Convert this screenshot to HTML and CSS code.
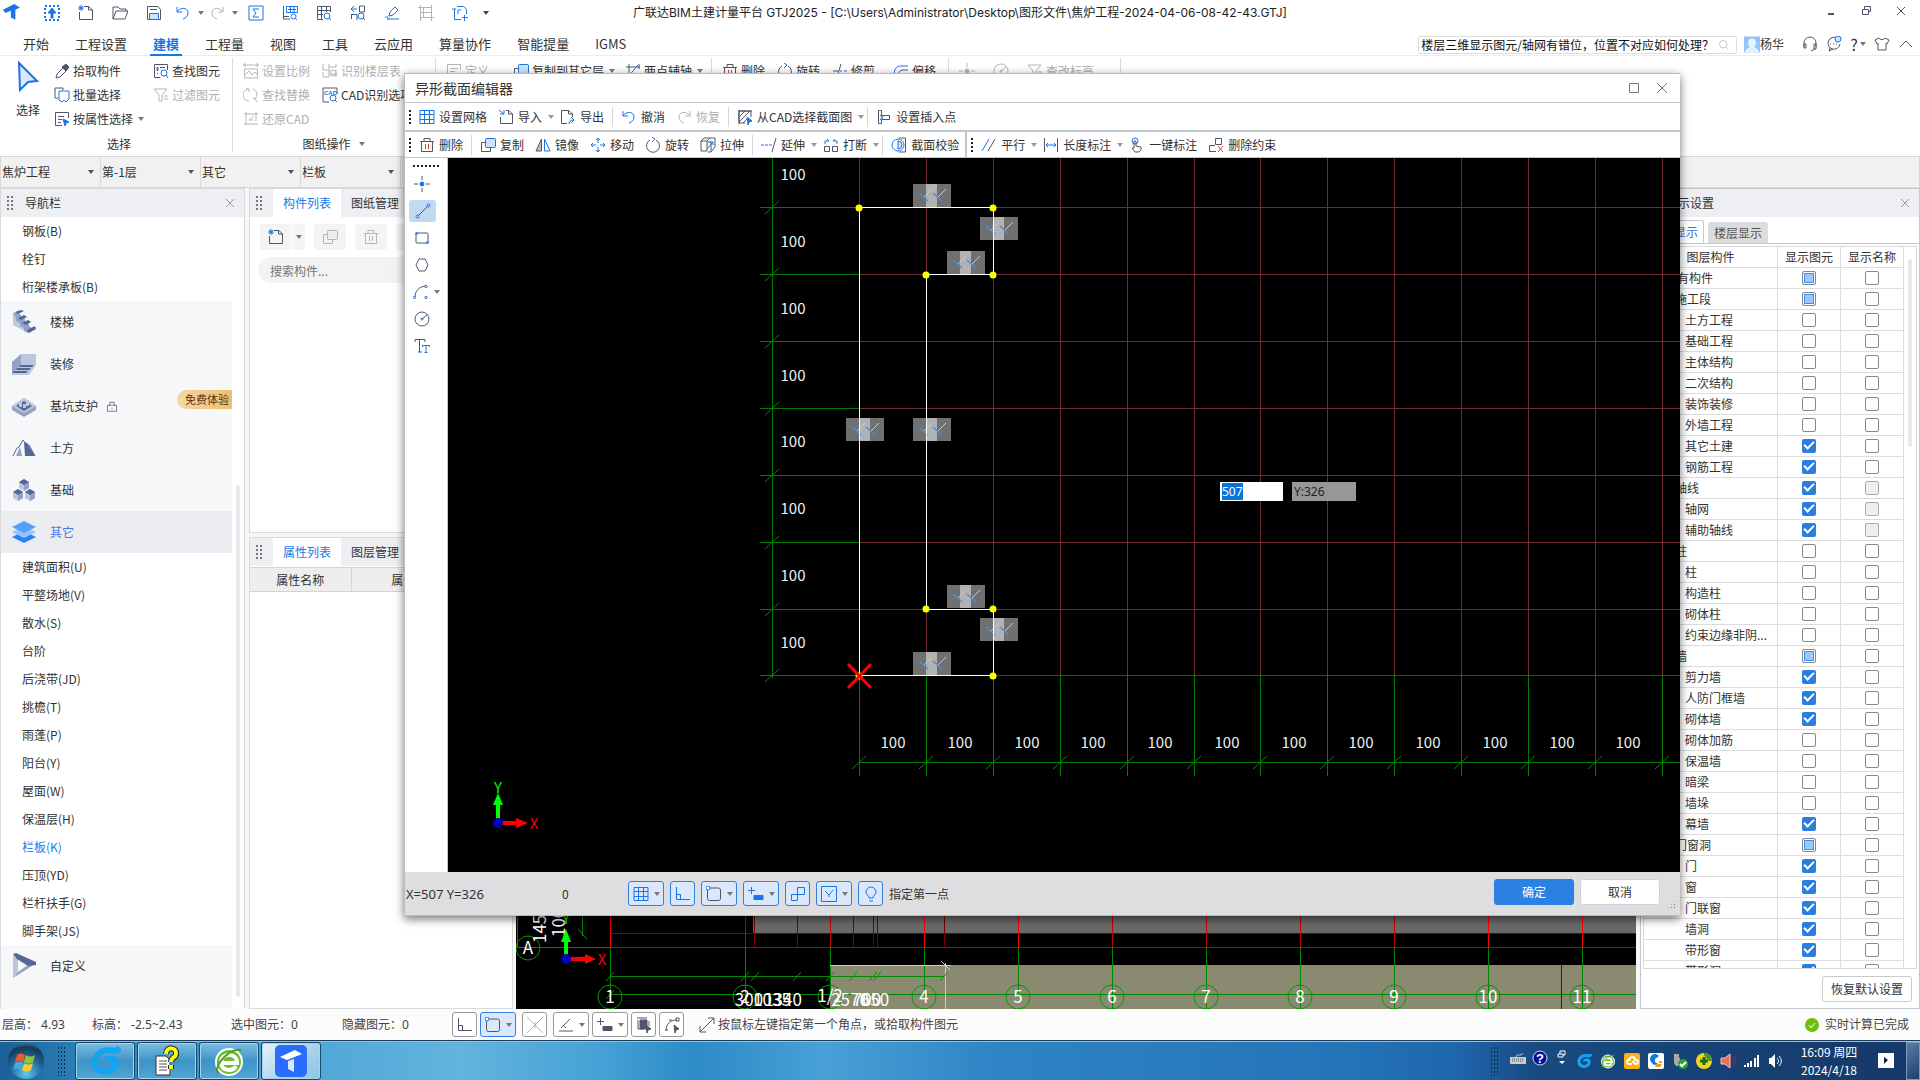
FILE: index.html
```html
<!DOCTYPE html>
<html lang="zh-CN">
<head>
<meta charset="utf-8">
<title>广联达BIM土建计量平台 GTJ2025</title>
<link rel="stylesheet" href="styles.css">
</head>
<body>
<svg class="defs" aria-hidden="true">
  <symbol id="undo" viewBox="0 0 16 16"><path class="b" d="M2 2v5h5M2 7C5 2 13 2 13 8c0 3-2 5-5 6"/></symbol>
  <symbol id="redo" viewBox="0 0 16 16"><path d="M14 2v5H9M14 7C11 2 3 2 3 8c0 3 2 5 5 6"/></symbol>
  <symbol id="new" viewBox="0 0 16 16"><path d="M6 1.500h5l3.500 3.500v9.500h-13V7M10.500 1.500V5h4"/><path class="b" d="M1 1l4 4M5 1L1 5M3 0v6M0 3h6"/></symbol>
  <symbol id="grid" viewBox="0 0 16 16"><path class="b" d="M1 1.500h14v13H1zM5.500 1.500v13M10.500 1.500v13M1 5.500h14M1 10.500h14"/></symbol>
  <symbol id="import" viewBox="0 0 16 16"><path d="M8 1.500h3l3.500 3.500v9.500h-12V8M10.500 1.500V5h4"/><path class="b" d="M1 1l5 4M6 1v4H2"/></symbol>
  <symbol id="export" viewBox="0 0 16 16"><path d="M7 14.500H1.500v-13H9l3.500 3.500v3M8.500 1.500V5h4"/><path class="b" d="M9 15c0-3 2-4 5-4M11 8l3 3-3 3"/></symbol>
  <symbol id="trash" viewBox="0 0 16 16"><path d="M1 4.500h14M5 4V1.500h6V4M2.500 4.500v10h11v-10"/><path class="r" d="M6.500 7v5M9.500 7v5"/></symbol>
  <symbol id="copy" viewBox="0 0 16 16"><path d="M5 5.500H1.500v9h9V11"/><rect class="bf" x="5.500" y="1.500" width="10" height="9" rx="1"/></symbol>
  <symbol id="mirror" viewBox="0 0 16 16"><path class="g" d="M6.500 2v12H1z"/><path class="b" d="M9.500 2v12H15z"/></symbol>
  <symbol id="move" viewBox="0 0 16 16"><path class="b" d="M8 1v5M8 10v5M1 8h5M10 8h5M6 3l2-2 2 2M6 13l2 2 2-2M3 6L1 8l2 2M13 6l2 2-2 2"/></symbol>
  <symbol id="rotate" viewBox="0 0 16 16"><path d="M11 3a6.500 6.500 0 1 1-6 0"/><path class="b" d="M7 0l3 2-3 3"/></symbol>
  <symbol id="stretch" viewBox="0 0 16 16"><path d="M1 4h6v10H1zM1 4l3-3h11v9l-4 5H8M7 4l3-3M8 5h3v9"/><path class="b" d="M7 12l6-7M10 5h3v3"/></symbol>
  <symbol id="extend" viewBox="0 0 16 16"><path d="M15 1l-4 14"/><path class="b" d="M0 8h3M4 8h3M8 8h3"/></symbol>
  <symbol id="break" viewBox="0 0 16 16"><path d="M1.500 9.500h5v5h-5zM9.500 9.500h5v5h-5z"/><path class="b" d="M2 4h4L4 2M2 7V4M14 4h-4l2-2M14 7V4"/></symbol>
  <symbol id="check-sec" viewBox="0 0 16 16"><path d="M8 1h6.500v14H8"/><circle class="b" cx="7" cy="8" r="6"/><path class="bf" d="M7 4a4 4 0 0 1 0 8z"/></symbol>
  <symbol id="parallel" viewBox="0 0 16 16"><path class="b" d="M1 14L8 2"/><path d="M7 14l7-12"/></symbol>
  <symbol id="length" viewBox="0 0 16 16"><path d="M1.500 1v14M14.500 1v14"/><path class="b" d="M3 8h10M5 6L3 8l2 2M11 6l2 2-2 2"/></symbol>
  <symbol id="touch" viewBox="0 0 16 16"><circle class="b" cx="6" cy="4" r="3"/><path d="M5 11V4h2v5l5 1v3l-2 2H6l-3-4z"/></symbol>
  <symbol id="del-con" viewBox="0 0 16 16"><path d="M7.500 1.500h6v6h-6zM7 8.500H1.500v6H8"/><path class="r" d="M10 9l5 6M15 9l-5 6"/></symbol>
  <symbol id="cad-sec" viewBox="0 0 16 16"><path d="M2 2h12v6M2 2v12h6M2 8l6-6M2 13L13 2M6 14l4-4M1 2h14M2 1v14"/><path class="bb" d="M10 8l5 4-3 1-1 3z"/></symbol>
  <symbol id="insert" viewBox="0 0 16 16"><path d="M2.500 1.500h3v5h8v4h-8v4h-3z"/><path class="b" d="M4 6l4 5M8 6l-4 5"/></symbol>
  <symbol id="picker" viewBox="0 0 16 16"><path d="M2 15l1-4 6-6 3 3-6 6z"/><path class="d" d="M8 4l4-3 3 3-3 4z"/></symbol>
  <symbol id="batch" viewBox="0 0 16 16"><path d="M4 11H1V1h8v2"/><path class="b" d="M5 4h10v8l-3 3-2-2-2 2-3-2z"/></symbol>
  <symbol id="attr" viewBox="0 0 16 16"><path d="M8 14.500H1.500v-13h13V7M4 5.500h6M4 8.500h4M4 11.500h3"/><path class="bb" d="M9 8l6 3-3 1-1 3z"/></symbol>
  <symbol id="find" viewBox="0 0 16 16"><path d="M7 14.500H1.500v-13h13V7M4 4.500h1v3H4zM4 10.500h1M7 4.500h5"/><circle class="b" cx="11" cy="10" r="3"/><path class="b" d="M13 12l2 3"/></symbol>
  <symbol id="filter" viewBox="0 0 16 16"><path d="M1 2h13L9 8v6H6V8zM11 9h4M11 12h4"/></symbol>
  <symbol id="ratio" viewBox="0 0 16 16"><path d="M0 2h16M2 0v4M14 0v4M1.500 6h13v9h-13zM2 12l4-4 3 4 3-3 3 3"/></symbol>
  <symbol id="floors" viewBox="0 0 16 16"><path d="M1 1v6h6M7 1v13H1V9M7 4h7V1M9 11h6M14 7v7"/><circle class="b" cx="11" cy="10" r="3"/></symbol>
  <symbol id="replace" viewBox="0 0 16 16"><path d="M6 14a6 6 0 0 1 0-12M3 2h3v3M10 2a6 6 0 0 1 2 10M10 11l2 1 2 3"/></symbol>
  <symbol id="restore" viewBox="0 0 16 16"><path d="M1 3h14M3 1v13M1 13h14M13 1v9M6 9l5-4M6 9h4"/></symbol>
  <symbol id="cad" viewBox="0 0 16 16"><path d="M7 15H1V1h14v6"/><text x="2" y="8" class="cadtext">CAD</text><circle class="b" cx="11" cy="11" r="3"/><path class="b" d="M13 13l2 2"/></symbol>
  <symbol id="define" viewBox="0 0 16 16"><path d="M8 14.500H1.500v-13h13V7M4 5.500h8M4 8.500h5M10 11.500h5"/></symbol>
  <symbol id="aux" viewBox="0 0 16 16"><path d="M1 4h14M4 1v14M14 1v5"/><path class="b" d="M3 14L13 2"/></symbol>
  <symbol id="trim" viewBox="0 0 16 16"><path d="M1 8h5M9 1L5 14"/><path class="b" d="M8 8h2M12 8h3"/></symbol>
  <symbol id="offset" viewBox="0 0 16 16"><path class="b" d="M1 14C1 6 3 3 8 3h7"/><path d="M5 14c0-5 2-7 5-7h5"/></symbol>
  <symbol id="point" viewBox="0 0 16 16"><path d="M8 0v4M8 12v4M0 8h4M12 8h4"/><circle class="bb" cx="8" cy="8" r="2"/></symbol>
  <symbol id="line" viewBox="0 0 16 16"><path d="M3 13L13 3"/><circle class="b" cx="2.500" cy="13.500" r="1.500"/><circle class="b" cx="13.500" cy="2.500" r="1.500"/></symbol>
  <symbol id="rect" viewBox="0 0 16 16"><rect x="2" y="3" width="12" height="10" rx="1"/><circle class="b" cx="2.500" cy="3.500" r="1"/><circle class="b" cx="13.500" cy="12.500" r="1"/></symbol>
  <symbol id="hex" viewBox="0 0 16 16"><path d="M5 2h6l3 6-3 6H5L2 8z"/></symbol>
  <symbol id="arc" viewBox="0 0 16 16"><path d="M2 13C2 7 6 3 12 2"/><circle class="b" cx="1.500" cy="13.500" r="1.200"/><circle class="b" cx="13" cy="2.500" r="1.200"/><circle class="b" cx="13" cy="13.500" r="1.200"/></symbol>
  <symbol id="gauge" viewBox="0 0 16 16"><circle cx="8" cy="8" r="7"/><path d="M8 8l5-4"/><circle class="b" cx="8" cy="8" r="1"/></symbol>
  <symbol id="tt" viewBox="0 0 16 16"><path d="M1 4V1.500h10V4M5.500 2v12M4 14h4"/><path class="b" d="M8.500 9V7.500h7V9M12 8v6.500M10.500 14.500h3"/></symbol>
  <symbol id="ortho" viewBox="0 0 16 16"><path d="M1.500 1v12.500H15M1.500 8.500h4v5"/></symbol>
  <symbol id="snap" viewBox="0 0 16 16"><rect x="1.500" y="2" width="13" height="12.500" rx="2"/><circle class="bw" cx="2" cy="2" r="2"/></symbol>
  <symbol id="plus-box" viewBox="0 0 16 16"><path d="M0 4.500h7M3.500 1v7"/><path class="d" d="M6 9.500h9v4H6z"/></symbol>
  <symbol id="cross" viewBox="0 0 16 16"><path d="M0 0l16 16M16 0L0 16M8 5v6"/></symbol>
  <symbol id="angle" viewBox="0 0 16 16"><path d="M3 11l9-9M1 14h14M5 8l3 3"/></symbol>
  <symbol id="pages" viewBox="0 0 16 16"><path class="d" d="M4 3h7v9H4z"/><path d="M1 1h10M13 4v5M2 3v9h5"/><path class="d" d="M10 8l5 4-3 1-1 3z"/></symbol>
  <symbol id="polyarc" viewBox="0 0 16 16"><path d="M2 14C2 7 6 3 13 3"/><path d="M1 13h3M5 3h3M12 1h3v3h-3z"/><path class="d" d="M10 8l5 4-3 1-1 3z"/></symbol>
  <symbol id="links" viewBox="0 0 16 16"><path d="M7.500 1.500h7v7h-7zM1.500 8.500h6v6h-6z"/></symbol>
  <symbol id="boxcheck" viewBox="0 0 16 16"><path d="M.5.500h15v15H.5zM4 5l4 4 4-5M8 9v2"/></symbol>
  <symbol id="bulb" viewBox="0 0 16 16"><path d="M6 12c0-3-3-3-3-6a5 5 0 0 1 10 0c0 3-3 3-3 6zM6 15h4"/></symbol>
  <symbol id="sum" viewBox="0 0 16 16"><path class="b" d="M1 1h14v14H1zM11 4H5l3 4-3 4h6"/></symbol>
  <symbol id="sheetfind" viewBox="0 0 16 16"><path d="M1.500 1v13H8M1 11.500h6"/><path class="b" d="M4.500 1.500h11v6h-11zM6 4.500h8M8.500 2v5M12 2v5"/><circle class="b" cx="11.500" cy="11.500" r="2.500"/><path class="b" d="M13 13l2 2"/></symbol>
  <symbol id="gridfind" viewBox="0 0 16 16"><path d="M7 14.500H1.500v-13h13V7M1 5.500h14M1 9.500h6M5.500 1v13M10.500 1v6"/><circle class="b" cx="11" cy="11" r="3"/><path class="b" d="M13 13l2 2"/></symbol>
  <symbol id="gfind" viewBox="0 0 16 16"><path d="M9.500 1h5v6h-5zM1 9.500h6V15M1.500 9v5"/><path class="b" d="M1 4h6M4 1L1 4l3 3"/><circle class="b" cx="11" cy="11" r="3"/><path class="b" d="M13 13l2 2"/></symbol>
  <symbol id="pen" viewBox="0 0 16 16"><path class="b" d="M5 11l1-4 5-5 3 3-5 5zM1 13c3-4 4 1 2 1h12"/></symbol>
  <symbol id="rail" viewBox="0 0 16 16"><path d="M2.500 0v16M13.500 0v16M2 2.500h11M2 7.500h11M2 12.500h11M5.500 3v10M0 2.500h2M13 12.500h3"/></symbol>
  <symbol id="addpage" viewBox="0 0 16 16"><path class="b" d="M5 1.500h7l2.500 3V9M2.500 4v10.500H9M2.500 11V5M9 5H6v4M10 12.500h6M12.500 10v6M0 4h4"/></symbol>
  <symbol id="open" viewBox="0 0 16 16"><path d="M1 14V2h5l2 2h6v2M1 14l3-8h12l-3 8z"/></symbol>
  <symbol id="save" viewBox="0 0 16 16"><path d="M1.500 1.500H12l2.500 3v10h-13zM4 4.500h7"/><path class="bf" d="M3.500 8.500h9v6h-9z"/></symbol>
  <symbol id="up" viewBox="0 0 16 16"><rect class="b dash" x="1" y="1" width="14" height="14"/><path class="bb" d="M8 3l4 5H9v5H7V8H4z"/></symbol>
  <symbol id="tlogo" viewBox="0 0 16 16"><path class="solid" d="M0 5L10 0l5 3-4 2v9l-4-2V6L2 8z"/></symbol>
  <symbol id="lock" viewBox="0 0 16 16"><path d="M2 7h12v8H2zM5 7V3h6v4M8 10v2"/></symbol>
  <symbol id="headset" viewBox="0 0 16 16"><path d="M2 11V7a6 6 0 0 1 12 0v4M2 8v4h2V8zM12 8v5h2V8zM13 13l-4 2"/></symbol>
  <symbol id="chat" viewBox="0 0 16 16"><path d="M11 2a6 6 0 1 0 3 6M4 12l-1 3 4-2M4 8h1M7 8h1M10 8h1"/><circle class="bf" cx="12" cy="3" r="3"/></symbol>
  <symbol id="shirt" viewBox="0 0 16 16"><path d="M5 2L1 4l2 4 1-1v7h8V7l1 1 2-4-4-2c-1 2-5 2-6 0z"/></symbol>
  <symbol id="mag" viewBox="0 0 16 16"><circle cx="7" cy="7" r="5"/><path d="M11 11l3 3"/></symbol>
  <symbol id="gspiral" viewBox="0 0 32 32"><path class="spiral" d="M31 3c-5 6-10 0-17 3C4 10 3 23 12 26c8 3 16-3 14-10-3-4-9-2-9 1"/></symbol>
  <symbol id="ebrowser" viewBox="0 0 32 32"><circle class="ebg" cx="16" cy="17" r="13"/><path class="eline" d="M8 18h16c0-11-16-11-16 0 0 8 12 9 15 3"/><path class="ering" d="M5 28C0 20 18 2 28 5"/></symbol>
</svg>

<div class="app">
  <header class="titlebar">
    <nav class="quick" aria-label="快速访问">
      <svg class="ic logo"><use href="#tlogo"/></svg>
      <button aria-label="上传"><svg class="ic"><use href="#up"/></svg></button>
      <button aria-label="新建"><svg class="ic"><use href="#new"/></svg></button>
      <button aria-label="打开"><svg class="ic"><use href="#open"/></svg></button>
      <button aria-label="保存"><svg class="ic"><use href="#save"/></svg></button>
      <button aria-label="撤消" class="caret"><svg class="ic"><use href="#undo"/></svg></button>
      <button aria-label="恢复" class="caret dis"><svg class="ic"><use href="#redo"/></svg></button>
      <button aria-label="汇总"><svg class="ic"><use href="#sum"/></svg></button>
      <button aria-label="查看报表"><svg class="ic"><use href="#sheetfind"/></svg></button>
      <button aria-label="查看工程量"><svg class="ic"><use href="#gridfind"/></svg></button>
      <button aria-label="查看钢筋"><svg class="ic"><use href="#gfind"/></svg></button>
      <button aria-label="编辑"><svg class="ic"><use href="#pen"/></svg></button>
      <button aria-label="钢筋三维" class="dis"><svg class="ic"><use href="#rail"/></svg></button>
      <button aria-label="添加"><svg class="ic"><use href="#addpage"/></svg></button>
      <button aria-label="更多" class="more caret"></button>
    </nav>
    <h1>广联达BIM土建计量平台 GTJ2025 - [C:\Users\Administrator\Desktop\图形文件\焦炉工程-2024-04-06-08-42-43.GTJ]</h1>
    <div class="winctl">
      <button aria-label="最小化"><svg class="ic"><path class="w2" d="M5 11h6"/></svg></button>
      <button aria-label="还原"><svg class="ic"><path d="M4.500 6.500h6v5h-6zM6.500 6V3.500h6v5H11"/></svg></button>
      <button aria-label="关闭"><svg class="ic"><path d="M4 4l8 8M12 4l-8 8"/></svg></button>
    </div>
  </header>

  <div class="menubar">
    <nav class="menus">
      <a href="#">开始</a><a href="#">工程设置</a><a href="#" class="on">建模</a><a href="#">工程量</a><a href="#">视图</a><a href="#">工具</a><a href="#">云应用</a><a href="#">算量协作</a><a href="#">智能提量</a><a href="#">IGMS</a>
    </nav>
    <div class="search"><div class="marquee"><span>楼层三维显示图元/轴网有错位，位置不对应如何处理？</span></div><svg class="ic dis"><use href="#mag"/></svg></div>
    <svg class="avatar" viewBox="0 0 16 16"><path class="avbg" d="M0 0h16v16H0z"/><path class="avfg" d="M8 2c6 0 4 8 2 8l5 4v2H1v-2l5-4C4 10 2 2 8 2z"/></svg>
    <span class="user">杨华</span>
    <div class="tools">
      <button aria-label="客服"><svg class="ic"><use href="#headset"/></svg></button>
      <button aria-label="消息"><svg class="ic"><use href="#chat"/></svg></button>
      <button class="help">?<i class="tri"></i></button>
      <button aria-label="皮肤"><svg class="ic"><use href="#shirt"/></svg></button>
      <button aria-label="收起"><svg class="ic"><path d="M2 11l6-6 6 6"/></svg></button>
    </div>
  </div>

  <section class="ribbon">
    <div class="group g1">
      <div class="cols">
        <button class="big"><svg viewBox="0 0 24 32"><path d="M3 3l18 18-9 1-8 8z"/></svg>选择</button>
        <div class="col c1">
          <button class="cmd"><svg class="ic"><use href="#picker"/></svg>拾取构件</button>
          <button class="cmd"><svg class="ic"><use href="#batch"/></svg>批量选择</button>
          <button class="cmd"><svg class="ic"><use href="#attr"/></svg>按属性选择<i class="tri"></i></button>
        </div>
        <div class="col">
          <button class="cmd"><svg class="ic"><use href="#find"/></svg>查找图元</button>
          <button class="cmd dis"><svg class="ic"><use href="#filter"/></svg>过滤图元</button>
        </div>
      </div>
      <div class="glabel">选择</div>
    </div>
    <div class="group g2">
      <div class="cols">
        <div class="col c2">
          <button class="cmd dis"><svg class="ic"><use href="#ratio"/></svg>设置比例</button>
          <button class="cmd dis"><svg class="ic"><use href="#replace"/></svg>查找替换</button>
          <button class="cmd dis"><svg class="ic"><use href="#restore"/></svg>还原CAD</button>
        </div>
        <div class="col">
          <button class="cmd dis"><svg class="ic"><use href="#floors"/></svg>识别楼层表</button>
          <button class="cmd"><svg class="ic"><use href="#cad"/></svg>CAD识别选项</button>
        </div>
      </div>
      <div class="glabel">图纸操作<i class="tri"></i></div>
    </div>
    <div class="group g3">
      <div class="cols">
        <button class="cmd dis wide"><svg class="ic"><use href="#define"/></svg>定义</button>
        <button class="cmd"><svg class="ic"><use href="#copy"/></svg>复制到其它层<i class="tri"></i></button>
        <button class="cmd"><svg class="ic"><use href="#aux"/></svg>两点辅轴<i class="tri"></i></button>
      </div>
    </div>
    <div class="group g4">
      <div class="cols">
        <button class="cmd"><svg class="ic"><use href="#trash"/></svg>删除</button>
        <button class="cmd"><svg class="ic"><use href="#rotate"/></svg>旋转</button>
        <button class="cmd"><svg class="ic"><use href="#trim"/></svg>修剪</button>
        <button class="cmd"><svg class="ic"><use href="#offset"/></svg>偏移</button>
      </div>
    </div>
    <div class="group g5">
      <div class="cols">
        <button class="cmd dis" aria-label="点"><svg class="ic"><use href="#point"/></svg></button>
        <button class="cmd dis" aria-label="圆"><svg class="ic"><use href="#gauge"/></svg></button>
        <button class="cmd dis"><svg class="ic"><use href="#filter"/></svg>查改标高</button>
      </div>
    </div>
  </section>

  <div class="combos">
    <span class="combo"><select aria-label="工程"><option>焦炉工程</option></select></span>
    <span class="combo"><select aria-label="楼层"><option>第-1层</option></select></span>
    <span class="combo"><select aria-label="类别"><option>其它</option></select></span>
    <span class="combo"><select aria-label="构件类型"><option>栏板</option></select></span>
  </div>

  <main class="work">
    <aside class="panel navp">
      <div class="phead"><i class="dots"></i><span>导航栏</span><button class="x" aria-label="关闭"><svg class="ic"><path d="M4 4l8 8M12 4l-8 8"/></svg></button></div>
      <div class="navwrap">
      <ul class="nav">
        <li><a href="#">钢板(B)</a></li><li><a href="#">栓钉</a></li><li><a href="#">桁架楼承板(B)</a></li>
        <li class="cat"><a href="#"><svg viewBox="0 0 24 24"><path class="l" d="M1 3v12l15 8v-4z"/><path class="m" d="M1 3l4-1 4 3v2l4 2v2l4 3v2l4 3-5 4-4-2v-3l-4-2v-3l-4-2V8z"/><path class="k" d="M3 2l6-2 3 1-6 3zM6 8l6-3 3 2-6 3zM10 13l6-3 3 2-5 3zM15 20l8-4 1 3-7 4z"/></svg>楼梯</a></li>
        <li class="cat"><a href="#"><svg viewBox="0 0 24 24"><path class="l" d="M9 2h15v11l-7 10H0V12z"/><path class="m" d="M9 2v10L0 22V10z"/><path class="k" d="M8 13h14l-2 2H7zM5 16h14l-2 2H4zM2 19h14l-2 2H1z"/></svg>装修</a></li>
        <li class="cat"><a href="#"><svg viewBox="0 0 24 24"><path class="m" d="M0 12l12-8 12 8v4l-12 7-12-7z"/><path class="l" d="M0 12l12-8 12 8-12 7z"/><path class="k" d="M4 12l8-5 8 5-8 5z"/><path class="l" d="M7 7h3v6H7zM14 6h3v6h-3zM11 10h3v4h-3z"/></svg>基坑支护<svg class="ic"><use href="#lock"/></svg><em>免费体验</em></a></li>
        <li class="cat"><a href="#"><svg viewBox="0 0 24 24"><path class="m" d="M4 20l4-9 2 9z"/><path class="k" d="M12 6l3 1 8 13H13z"/><path class="ln" d="M1 20l4-8 2-1 4-7 3 4 3 1 6 11"/></svg>土方</a></li>
        <li class="cat"><a href="#"><svg viewBox="0 0 24 24"><path class="l" d="M12 1l5 3v6l-5 3-5-3V4zM6 11l5 3v6l-5 3-5-3v-6zM18 11l5 3v6l-5 3-5-3v-6z"/><path class="m" d="M12 7l5-3v6l-5 3zM6 17l5-3v6l-5 3zM18 17l5-3v6l-5 3z"/><path class="k" d="M12 1l5 3-5 3-5-3zM6 11l5 3-5 3-5-3zM18 11l5 3-5 3-5-3z"/></svg>基础</a></li>
        <li class="cat on"><a href="#"><svg viewBox="0 0 24 24"><path class="b1" d="M0 17l12-6 12 6-12 6z"/><path class="b2" d="M0 12l12-6 12 6-12 6z"/><path class="b3" d="M0 7l12-6 12 6-12 6z"/></svg>其它</a></li>
        <li><a href="#">建筑面积(U)</a></li><li><a href="#">平整场地(V)</a></li><li><a href="#">散水(S)</a></li><li><a href="#">台阶</a></li><li><a href="#">后浇带(JD)</a></li><li><a href="#">挑檐(T)</a></li><li><a href="#">雨蓬(P)</a></li><li><a href="#">阳台(Y)</a></li><li><a href="#">屋面(W)</a></li><li><a href="#">保温层(H)</a></li><li class="cur"><a href="#">栏板(K)</a></li><li><a href="#">压顶(YD)</a></li><li><a href="#">栏杆扶手(G)</a></li><li><a href="#">脚手架(JS)</a></li>
        <li class="cat last"><a href="#"><svg viewBox="0 0 24 24"><path class="l" d="M1 1l5 3v14l-5 6z"/><path class="m" d="M1 24l5-6 10-7 7-1z"/><path class="k" d="M1 0l3-1 20 9v3l-8 1L5 5z"/></svg>自定义</a></li>
      </ul>
      <i class="thumb"></i>
      </div>
    </aside>

    <div class="midcol">
      <section class="panel p1">
        <div class="phead"><i class="dots"></i><button class="tab on">构件列表</button><button class="tab">图纸管理</button></div>
        <div class="btns">
          <div class="split"><button aria-label="新建构件"><svg class="ic"><use href="#new"/></svg></button><button aria-label="新建选项"><i class="tri"></i></button></div>
          <button aria-label="复制构件" class="dis"><svg class="ic"><use href="#copy"/></svg></button>
          <button aria-label="删除构件" class="dis"><svg class="ic"><use href="#trash"/></svg></button>
          <button aria-label="存档" class="dis"></button>
        </div>
        <input class="find" type="text" placeholder="搜索构件..." aria-label="搜索构件">
      </section>
      <section class="panel p2">
        <div class="phead"><i class="dots"></i><button class="tab on">属性列表</button><button class="tab">图层管理</button></div>
        <table class="props"><thead><tr><th>属性名称</th><th>属性值</th><th>附加</th></tr></thead></table>
      </section>
    </div>

    <section class="model" aria-label="模型视图">
      <svg viewBox="516 188 1120 821" preserveAspectRatio="xMinYMax slice">
        <path fill="#696969" d="M753 700h883v233H753z"/>
        <path fill="#8a8a70" d="M830 965h806v44H830z"/>
        <g shape-rendering="crispEdges" fill="none">
          <path stroke="#7a0000" d="M610 933h1026M754 916v31M797 916v31M853 916v31M873 916v31M877 916v31M944 916v31"/>
          <path stroke="#c00000" d="M610 947h1026M745 900v47M830 900v47M1112 900v47M1206 900v47M1300 900v47M1394 900v47"/>
          <path stroke="#f00" d="M610 900v47M924 900v47M1018 900v47M1488 900v47M1582 900v47"/>
          <path stroke="#080" d="M517 900v48M517 947h94M582 900v36M610 947v50M745 947v50M830 947v50M924 947v50M1018 947v50M1112 947v62M1206 947v62M1300 947v62M1394 947v62M1488 947v62M1582 947v62M610 976h334M610 994h1026"/>
          <path stroke="#222" d="M1561 965v44"/>
          <path stroke="#ccc" d="M830 965h121M945 963v46"/>
        </g>
        <g stroke="#090" fill="none">
          <path d="M606 981l8-9M741 981l8-9M751 981l8-9M793 981l8-9M826 981l8-9M849 981l8-9M869 981l8-9M873 981l8-9M940 981l8-9M578 929l9 10M606 999l8-9"/>
          <path stroke="#ccc" d="M941 961l9 9"/>
          <circle cx="528" cy="948" r="12"/><circle cx="610" cy="997" r="12"/><circle cx="745" cy="997" r="12"/><circle cx="830" cy="997" r="12"/><circle cx="924" cy="997" r="12"/><circle cx="1018" cy="997" r="12"/><circle cx="1112" cy="997" r="12"/><circle cx="1206" cy="997" r="12"/><circle cx="1300" cy="997" r="12"/><circle cx="1394" cy="997" r="12"/><circle cx="1488" cy="997" r="12"/><circle cx="1582" cy="997" r="12"/>
        </g>
        <g class="mtext">
          <text x="528" y="954">A</text><text x="610" y="1003">1</text><text x="745" y="1003">2</text><text x="830" y="1002">1/2</text><text x="924" y="1003">4</text><text x="1018" y="1003">5</text><text x="1112" y="1003">6</text><text x="1206" y="1003">7</text><text x="1300" y="1003">8</text><text x="1394" y="1003">9</text><text x="1488" y="1003">10</text><text x="1582" y="1003">11</text>
          <text x="749" y="1006">300</text><text x="772" y="1006">1035</text><text x="783" y="1006">1340</text><text x="850" y="1006">2570</text><text x="867" y="1006">700</text><text x="875" y="1006">650</text>
          <text transform="translate(546 943) rotate(-90)" class="vt">1450</text><text transform="translate(565 937) rotate(-90)" class="vt">1000</text>
        </g>
        <text class="ax" fill="#0f0" x="566" y="924">Y</text>
        <path fill="#0f0" d="M564 959v-17h-3l5-13 5 13h-3v17z"/><path fill="#f00" d="M566 957h19v-3l11 5-11 5v-3h-19z"/><circle cx="566" cy="959" r="5" fill="#00b"/>
        <text class="ax" fill="#f00" x="602" y="965">X</text>
      </svg>
    </section>

    <aside class="panel disp">
      <div class="phead"><span>显示设置</span><button class="x" aria-label="关闭"><svg class="ic"><path d="M4 4l8 8M12 4l-8 8"/></svg></button></div>
      <div class="dtabs"><button class="on">图层显示</button><button>楼层显示</button></div>
      <div class="tbox">
        <table class="layers">
          <thead><tr><th>图层构件</th><th>显示图元</th><th>显示名称</th></tr></thead>
          <tbody>
          <tr class="l0"><td>所有构件</td><td><input type="checkbox" class="mix" aria-label="所有构件图元"></td><td><input type="checkbox" aria-label="所有构件名称"></td></tr>
          <tr class="l1"><td>施工段</td><td><input type="checkbox" class="mix" aria-label="施工段图元"></td><td><input type="checkbox" aria-label="施工段名称"></td></tr>
          <tr><td>土方工程</td><td><input type="checkbox" aria-label="土方工程图元"></td><td><input type="checkbox" aria-label="土方工程名称"></td></tr>
          <tr><td>基础工程</td><td><input type="checkbox" aria-label="基础工程图元"></td><td><input type="checkbox" aria-label="基础工程名称"></td></tr>
          <tr><td>主体结构</td><td><input type="checkbox" aria-label="主体结构图元"></td><td><input type="checkbox" aria-label="主体结构名称"></td></tr>
          <tr><td>二次结构</td><td><input type="checkbox" aria-label="二次结构图元"></td><td><input type="checkbox" aria-label="二次结构名称"></td></tr>
          <tr><td>装饰装修</td><td><input type="checkbox" aria-label="装饰装修图元"></td><td><input type="checkbox" aria-label="装饰装修名称"></td></tr>
          <tr><td>外墙工程</td><td><input type="checkbox" aria-label="外墙工程图元"></td><td><input type="checkbox" aria-label="外墙工程名称"></td></tr>
          <tr><td>其它土建</td><td><input type="checkbox" checked aria-label="其它土建图元"></td><td><input type="checkbox" aria-label="其它土建名称"></td></tr>
          <tr><td>钢筋工程</td><td><input type="checkbox" checked aria-label="钢筋工程图元"></td><td><input type="checkbox" aria-label="钢筋工程名称"></td></tr>
          <tr class="l1"><td>轴线</td><td><input type="checkbox" checked aria-label="轴线图元"></td><td><input type="checkbox" disabled aria-label="轴线名称"></td></tr>
          <tr><td>轴网</td><td><input type="checkbox" checked aria-label="轴网图元"></td><td><input type="checkbox" disabled aria-label="轴网名称"></td></tr>
          <tr><td>辅助轴线</td><td><input type="checkbox" checked aria-label="辅助轴线图元"></td><td><input type="checkbox" disabled aria-label="辅助轴线名称"></td></tr>
          <tr class="l1"><td>柱</td><td><input type="checkbox" aria-label="柱类图元"></td><td><input type="checkbox" aria-label="柱类名称"></td></tr>
          <tr><td>柱</td><td><input type="checkbox" aria-label="柱图元"></td><td><input type="checkbox" aria-label="柱名称"></td></tr>
          <tr><td>构造柱</td><td><input type="checkbox" aria-label="构造柱图元"></td><td><input type="checkbox" aria-label="构造柱名称"></td></tr>
          <tr><td>砌体柱</td><td><input type="checkbox" aria-label="砌体柱图元"></td><td><input type="checkbox" aria-label="砌体柱名称"></td></tr>
          <tr><td>约束边缘非阴...</td><td><input type="checkbox" aria-label="约束边缘图元"></td><td><input type="checkbox" aria-label="约束边缘名称"></td></tr>
          <tr class="l1"><td>墙</td><td><input type="checkbox" class="mix" aria-label="墙图元"></td><td><input type="checkbox" aria-label="墙名称"></td></tr>
          <tr><td>剪力墙</td><td><input type="checkbox" checked aria-label="剪力墙图元"></td><td><input type="checkbox" aria-label="剪力墙名称"></td></tr>
          <tr><td>人防门框墙</td><td><input type="checkbox" checked aria-label="人防门框墙图元"></td><td><input type="checkbox" aria-label="人防门框墙名称"></td></tr>
          <tr><td>砌体墙</td><td><input type="checkbox" checked aria-label="砌体墙图元"></td><td><input type="checkbox" aria-label="砌体墙名称"></td></tr>
          <tr><td>砌体加筋</td><td><input type="checkbox" aria-label="砌体加筋图元"></td><td><input type="checkbox" aria-label="砌体加筋名称"></td></tr>
          <tr><td>保温墙</td><td><input type="checkbox" aria-label="保温墙图元"></td><td><input type="checkbox" aria-label="保温墙名称"></td></tr>
          <tr><td>暗梁</td><td><input type="checkbox" aria-label="暗梁图元"></td><td><input type="checkbox" aria-label="暗梁名称"></td></tr>
          <tr><td>墙垛</td><td><input type="checkbox" aria-label="墙垛图元"></td><td><input type="checkbox" aria-label="墙垛名称"></td></tr>
          <tr><td>幕墙</td><td><input type="checkbox" checked aria-label="幕墙图元"></td><td><input type="checkbox" aria-label="幕墙名称"></td></tr>
          <tr class="l1"><td>门窗洞</td><td><input type="checkbox" class="mix" aria-label="门窗洞图元"></td><td><input type="checkbox" aria-label="门窗洞名称"></td></tr>
          <tr><td>门</td><td><input type="checkbox" checked aria-label="门图元"></td><td><input type="checkbox" aria-label="门名称"></td></tr>
          <tr><td>窗</td><td><input type="checkbox" checked aria-label="窗图元"></td><td><input type="checkbox" aria-label="窗名称"></td></tr>
          <tr><td>门联窗</td><td><input type="checkbox" checked aria-label="门联窗图元"></td><td><input type="checkbox" aria-label="门联窗名称"></td></tr>
          <tr><td>墙洞</td><td><input type="checkbox" checked aria-label="墙洞图元"></td><td><input type="checkbox" aria-label="墙洞名称"></td></tr>
          <tr><td>带形窗</td><td><input type="checkbox" checked aria-label="带形窗图元"></td><td><input type="checkbox" aria-label="带形窗名称"></td></tr>
          <tr><td>带形洞</td><td><input type="checkbox" checked aria-label="带形洞图元"></td><td><input type="checkbox" aria-label="带形洞名称"></td></tr>
          </tbody>
        </table>
        <i class="thumb"></i>
      </div>
      <div class="pfoot"><button>恢复默认设置</button></div>
    </aside>
  </main>

  <footer class="status">
    <span class="s1">层高： 4.93</span><span class="s2">标高： -2.5~2.43</span><span class="s3">选中图元：0</span><span class="s4">隐藏图元：0</span>
    <div class="modes">
      <button aria-label="正交"><svg class="ic"><use href="#ortho"/></svg></button>
      <button aria-label="捕捉" class="on caret"><svg class="ic"><use href="#snap"/></svg></button>
      <button aria-label="交点" class="dis"><svg class="ic"><use href="#cross"/></svg></button>
      <button aria-label="角度" class="caret"><svg class="ic"><use href="#angle"/></svg></button>
      <button aria-label="动态输入" class="caret"><svg class="ic"><use href="#plus-box"/></svg></button>
      <button aria-label="选择设置"><svg class="ic"><use href="#pages"/></svg></button>
      <button aria-label="弧线"><svg class="ic"><use href="#polyarc"/></svg></button>
    </div>
    <svg class="ic"><path d="M1 15L15 1M9 1h6v6M1 9v6h6"/></svg>
    <span class="tip">按鼠标左键指定第一个角点，或拾取构件图元</span>
    <svg class="ok" viewBox="0 0 14 14"><circle cx="7" cy="7" r="7"/><path d="M4 7l2 3 4-5"/></svg>
    <span class="done">实时计算已完成</span>
  </footer>

  <div class="taskbar">
    <button class="orb" aria-label="开始"><svg viewBox="0 0 36 36"><path fill="#f25a22" d="M9 12c3-2 5-2 8 0l-2 7c-3-2-5-2-8 0z"/><path fill="#8cc63e" d="M18 12c3 2 6 2 9 0l-2 7c-3 2-5 2-9 0z"/><path fill="#49a7e6" d="M7 20c3-2 5-2 8 0l-2 7c-3-2-5-2-8 0z"/><path fill="#fcc934" d="M16 20c3 2 5 2 9 0l-2 7c-3 2-6 2-9 0z"/></svg></button>
    <i class="tdots"></i>
    <button class="task" aria-label="广联达G"><svg viewBox="0 0 32 32"><use href="#gspiral"/></svg></button>
    <button class="task" aria-label="帮助"><svg viewBox="0 0 32 32"><path fill="#fff" stroke="#333" d="M5 11h10l4 4v15H5z"/><path stroke="#555" d="M8 16h8M8 19h8M8 22h8M8 25h8"/><path class="qo" d="M15 9c0-8 11-7 10 0 0 4-5 3-5 8M20 20v4"/><path class="qi" d="M15 9c0-8 11-7 10 0 0 4-5 3-5 8M20 20v4"/></svg></button>
    <button class="task" aria-label="浏览器"><svg viewBox="0 0 32 32"><use href="#ebrowser"/></svg></button>
    <button class="task on" aria-label="GTJ"><svg viewBox="0 0 32 32"><rect width="32" height="32" rx="5" fill="#2b6cff"/><path fill="#fff" d="M5 12L20 5l7 4-15 6z"/><path fill="#dbe6ff" d="M13 16l6-2v13l-6-3z"/></svg></button>
    <div class="tray">
      <i class="tdots"></i>
      <svg viewBox="0 0 16 16"><path fill="#ccc" d="M0 7h16v7H0z"/><path stroke="#555" stroke-dasharray="1 1" d="M2 9h12M2 11h12"/><path fill="none" stroke="#ccc" d="M6 7c0-4 5 0 7-4"/></svg>
      <svg viewBox="0 0 16 16"><circle cx="8" cy="8" r="7" fill="#00129a" stroke="#cdd"/><text x="8" y="13" class="q">?</text></svg>
      <svg viewBox="0 0 16 16"><path fill="none" stroke="#fff" d="M4 4h5v3H4zM6 4V1h5v4H9"/><path fill="#fff" d="M5 11h6l-3 3z"/></svg>
      <svg viewBox="0 0 32 32"><use href="#gspiral"/></svg>
      <svg viewBox="0 0 32 32"><use href="#ebrowser"/></svg>
      <svg viewBox="0 0 16 16"><rect width="16" height="16" rx="2" fill="#ffb012"/><path fill="none" stroke="#fff" stroke-width="2" d="M8 11H5a2 2 0 0 1 0-4c1-4 6-4 6 0h1a2 2 0 0 1 0 4c-2 0-2-3-4-2"/></svg>
      <svg viewBox="0 0 16 16"><rect width="16" height="16" rx="2" fill="#fff"/><path fill="#1378d8" d="M3 9a5 5 0 0 1 8-6L7 6v3l3 2-4 1z"/><path fill="#f59a1c" d="M8 11h6l-2 3H7zM11 8h3v2h-3z"/></svg>
      <svg viewBox="0 0 16 16"><path fill="#aaa" d="M2 1h5v4h1v5l-2 3H4l-2-3z"/><circle cx="11" cy="11" r="5" fill="#28a428"/><path fill="none" stroke="#fff" stroke-width="2" d="M8 11l2 2 4-4"/></svg>
      <svg viewBox="0 0 16 16"><circle cx="8" cy="8" r="8" fill="#f6d21c"/><path fill="#3a9a2a" d="M8 0a8 8 0 0 1 8 8h-3L8 2z"/><path stroke="#176b1a" stroke-width="3" d="M8 4v8M4 8h8"/></svg>
      <svg viewBox="0 0 16 16"><path fill="#e8744f" stroke="#fbd" d="M1 5h4l5-4v14l-5-4H1z"/><path fill="none" stroke="#833" d="M12 4c2 3 2 5 0 8M14 3c2 4 2 6 0 10"/></svg>
      <svg viewBox="0 0 16 16"><path stroke="#fff" stroke-width="2" d="M1 14v-2M4 14v-4M7 14V8M11 14V5M14 14V2"/></svg>
      <svg viewBox="0 0 16 16"><path fill="#fff" d="M1 5h2l4-4v14l-4-4H1z"/><path fill="none" stroke="#fff" d="M9 5c2 2 2 4 0 6M11 3c3 3 3 7 0 10"/></svg>
      <time><span>16:09 周四</span><span>2024/4/18</span></time>
      <svg class="flag" viewBox="0 0 16 16"><path fill="#fff" d="M0 0h16v15H0z"/><path fill="#123" d="M6 4l4 3-4 4z"/></svg>
      <button class="desk" aria-label="显示桌面"></button>
    </div>
  </div>
</div>

<div class="dialog" role="dialog" aria-labelledby="dlg">
  <div class="dtitle"><h2 id="dlg">异形截面编辑器</h2>
    <button aria-label="最大化"><svg class="ic"><path d="M3.500 3.500h9v9h-9z"/></svg></button>
    <button aria-label="关闭"><svg class="ic"><path d="M3 3l10 10M13 3L3 13"/></svg></button>
  </div>
  <div class="bar">
    <i class="grip"></i>
    <button class="cmd"><svg class="ic"><use href="#grid"/></svg>设置网格</button>
    <button class="cmd"><svg class="ic"><use href="#import"/></svg>导入<i class="tri"></i></button>
    <button class="cmd"><svg class="ic"><use href="#export"/></svg>导出</button>
    <i class="sep"></i>
    <button class="cmd"><svg class="ic"><use href="#undo"/></svg>撤消</button>
    <button class="cmd dis"><svg class="ic"><use href="#redo"/></svg>恢复</button>
    <i class="sep"></i>
    <button class="cmd"><svg class="ic"><use href="#cad-sec"/></svg>从CAD选择截面图<i class="tri"></i></button>
    <i class="sep"></i>
    <button class="cmd"><svg class="ic"><use href="#insert"/></svg>设置插入点</button>
  </div>
  <div class="bar">
    <i class="grip"></i>
    <button class="cmd"><svg class="ic"><use href="#trash"/></svg>删除</button>
    <i class="sep"></i>
    <button class="cmd"><svg class="ic"><use href="#copy"/></svg>复制</button>
    <button class="cmd"><svg class="ic"><use href="#mirror"/></svg>镜像</button>
    <button class="cmd"><svg class="ic"><use href="#move"/></svg>移动</button>
    <button class="cmd"><svg class="ic"><use href="#rotate"/></svg>旋转</button>
    <button class="cmd"><svg class="ic"><use href="#stretch"/></svg>拉伸</button>
    <i class="sep"></i>
    <button class="cmd"><svg class="ic"><use href="#extend"/></svg>延伸<i class="tri"></i></button>
    <button class="cmd"><svg class="ic"><use href="#break"/></svg>打断<i class="tri"></i></button>
    <i class="sep"></i>
    <button class="cmd"><svg class="ic"><use href="#check-sec"/></svg>截面校验</button>
    <i class="sep thick"></i>
    <i class="grip"></i>
    <button class="cmd"><svg class="ic"><use href="#parallel"/></svg>平行<i class="tri"></i></button>
    <button class="cmd"><svg class="ic"><use href="#length"/></svg>长度标注<i class="tri"></i></button>
    <button class="cmd"><svg class="ic"><use href="#touch"/></svg>一键标注</button>
    <button class="cmd"><svg class="ic"><use href="#del-con"/></svg>删除约束</button>
  </div>
  <div class="dbody">
    <div class="side">
      <i class="hgrip"></i>
      <button aria-label="点"><svg class="ic"><use href="#point"/></svg></button>
      <button aria-label="直线" class="on"><svg class="ic"><use href="#line"/></svg></button>
      <button aria-label="矩形"><svg class="ic"><use href="#rect"/></svg></button>
      <button aria-label="多边形"><svg class="ic"><use href="#hex"/></svg></button>
      <button aria-label="弧" class="caret"><svg class="ic"><use href="#arc"/></svg></button>
      <button aria-label="圆"><svg class="ic"><use href="#gauge"/></svg></button>
      <button aria-label="文字"><svg class="ic"><use href="#tt"/></svg></button>
    </div>
    <div class="draw">
      <svg viewBox="448 158 1232 714" preserveAspectRatio="xMinYMin slice">
        <defs>
          <g id="mk"><path fill="#707070" d="M0 0h38v23H0z"/><path fill="#b2b2b2" d="M13 0h11v23H13z"/><path stroke="#c9c9c9" fill="none" d="M11 13l8-8M25 13l8-8"/><path stroke="#4a90d9" fill="none" stroke-width="1.500" d="M6 9l9 8M20 9l9 8"/></g>
          <path id="tk" d="M-7 7L7-6"/>
        </defs>
        <g shape-rendering="crispEdges" fill="none">
          <path stroke="#702c31" d="M859 207h821M859 274h821M859 341h821M859 408h821M859 475h821M859 542h821M859 609h821M859 675h821M926 158v517M993 158v517M1060 158v517M1127 158v517M1194 158v517M1260 158v517M1327 158v517M1394 158v517M1461 158v517M1528 158v517M1595 158v517M1662 158v517M859 158v49"/>
          <path stroke="#007d00" d="M760 207h99M760 274h99M760 341h99M760 408h99M760 475h99M760 542h99M760 609h99M760 675h99M772 158v520M859 762h821M859 675v101M926 675v101M993 675v101M1060 675v101M1127 675v101M1194 675v101M1260 675v101M1327 675v101M1394 675v101M1461 675v101M1528 675v101M1595 675v101M1662 675v101"/>
        </g>
        <g stroke="#008a00">
          <use href="#tk" x="772" y="207"/><use href="#tk" x="772" y="274"/><use href="#tk" x="772" y="341"/><use href="#tk" x="772" y="408"/><use href="#tk" x="772" y="475"/><use href="#tk" x="772" y="542"/><use href="#tk" x="772" y="609"/><use href="#tk" x="772" y="675"/>
          <use href="#tk" x="859" y="762"/><use href="#tk" x="926" y="762"/><use href="#tk" x="993" y="762"/><use href="#tk" x="1060" y="762"/><use href="#tk" x="1127" y="762"/><use href="#tk" x="1194" y="762"/><use href="#tk" x="1260" y="762"/><use href="#tk" x="1327" y="762"/><use href="#tk" x="1394" y="762"/><use href="#tk" x="1461" y="762"/><use href="#tk" x="1528" y="762"/><use href="#tk" x="1595" y="762"/><use href="#tk" x="1662" y="762"/>
        </g>
        <g class="dims">
          <text x="793" y="180">100</text><text x="793" y="247">100</text><text x="793" y="314">100</text><text x="793" y="381">100</text><text x="793" y="447">100</text><text x="793" y="514">100</text><text x="793" y="581">100</text><text x="793" y="648">100</text>
          <text x="893" y="748">100</text><text x="960" y="748">100</text><text x="1027" y="748">100</text><text x="1093" y="748">100</text><text x="1160" y="748">100</text><text x="1227" y="748">100</text><text x="1294" y="748">100</text><text x="1361" y="748">100</text><text x="1428" y="748">100</text><text x="1495" y="748">100</text><text x="1562" y="748">100</text><text x="1628" y="748">100</text>
        </g>
        <use href="#mk" x="913" y="184"/><use href="#mk" x="980" y="217"/><use href="#mk" x="947" y="251"/><use href="#mk" x="846" y="418"/><use href="#mk" x="913" y="418"/><use href="#mk" x="947" y="585"/><use href="#mk" x="980" y="618"/><use href="#mk" x="913" y="652"/>
        <path shape-rendering="crispEdges" fill="none" stroke="#fff" d="M859 207h134v67h-67v335h67v66H859z"/>
        <g fill="#ff0"><circle cx="859" cy="208" r="3.500"/><circle cx="993" cy="208" r="3.500"/><circle cx="993" cy="275" r="3.500"/><circle cx="926" cy="275" r="3.500"/><circle cx="926" cy="609" r="3.500"/><circle cx="993" cy="609" r="3.500"/><circle cx="993" cy="676" r="3.500"/><circle cx="859" cy="676" r="3.500"/></g>
        <path stroke="red" stroke-width="3" d="M848 664l23 24M871 664l-23 24"/>
        <path fill="#0f0" d="M496 823v-18h-3l5-12 5 12h-3v18z"/><path fill="#f00" d="M498 821h18v-3l12 5-12 5v-3h-18z"/><circle cx="498" cy="823" r="5" fill="#00b"/>
        <text class="ax" fill="#0f0" x="498" y="793">Y</text><text class="ax" fill="#f00" x="534" y="829">X</text>
      </svg>
      <div class="coords"><input class="cx" aria-label="X坐标" value="507"><input class="cy" aria-label="Y坐标" value="Y:326"></div>
    </div>
  </div>
  <div class="dfoot">
    <span class="xy">X=507 Y=326</span><span class="zero">0</span>
    <div class="modes">
      <button aria-label="网格" class="on caret"><svg class="ic"><use href="#grid"/></svg></button>
      <button aria-label="正交" class="on blue"><svg class="ic"><use href="#ortho"/></svg></button>
      <button aria-label="捕捉" class="on caret"><svg class="ic"><use href="#snap"/></svg></button>
      <button aria-label="动态输入" class="on blue caret"><svg class="ic"><use href="#plus-box"/></svg></button>
      <button aria-label="约束" class="on blue"><svg class="ic"><use href="#links"/></svg></button>
      <button aria-label="约束显示" class="on blue caret"><svg class="ic"><use href="#boxcheck"/></svg></button>
      <button aria-label="提示" class="on blue"><svg class="ic"><use href="#bulb"/></svg></button>
    </div>
    <span class="hint">指定第一点</span>
    <button class="act pri">确定</button><button class="act">取消</button>
    <i class="rs"></i>
  </div>
</div>
</body>
</html>
```
FILE: styles.css
```css
* { box-sizing: border-box; }
html, body { height: 100%; }
body { margin: 0; overflow: hidden; background: #fff; color: #333; font: 12px/18px "Noto Sans CJK SC", sans-serif; --blue: #1a73e8; --ink: #50566a; }
button, input, select { font: inherit; color: inherit; border: 0; background: none; padding: 0; margin: 0; }
button { display: flex; align-items: center; justify-content: center; flex: none; white-space: nowrap; }
a { color: inherit; text-decoration: none; }
h1, h2 { margin: 0; font-weight: 400; }
ul { list-style: none; margin: 0; padding: 0; }
i, em { font-style: normal; }
.defs { display: none; }

.ic { width: 16px; height: 16px; flex: none; fill: none; stroke: var(--ink); }
.b { stroke: var(--blue); }
.bf { stroke: var(--blue); fill: var(--soft, #cfe2fb); }
.bb { stroke: var(--blue); fill: var(--blue); }
.bw { stroke: var(--blue); fill: #fff; }
.r { stroke: var(--red, #d93a3a); }
.g { fill: #b9bfca; }
.d { fill: var(--ink); }
.w2 { stroke-width: 2; }
.dash { stroke-dasharray: 2 2; stroke-width: 2; }
.solid { fill: var(--blue); stroke: none; }
.cadtext { font: bold 6px "Liberation Sans", sans-serif; fill: var(--blue); stroke: none; }
.dis { color: #b0b0b0; --blue: #b5b5b5; --ink: #b5b5b5; --red: #b5b5b5; --soft: #eee; }
.tri, .caret::after { content: ""; width: 0; height: 0; flex: none; border: 3px solid transparent; border-top: 4px solid #777; border-bottom: 0; }

.app { height: 100%; display: flex; flex-direction: column; }
.titlebar { height: 28px; flex: none; display: grid; grid-template-columns: 1fr auto 1fr; align-items: center; padding-bottom: 2px; }
.quick { display: flex; align-items: center; }
.quick .logo { width: 20px; height: 18px; margin: 0 13px 0 2px; }
.quick button { width: 34px; height: 24px; }
.quick button.caret { gap: 7px; }
.quick button.caret:not(.more) { padding-left: 2px; }
.quick .more { width: 18px; }
.more.caret::after { border-top-color: #444; }
h1 { font: 12px/24px Inter, "Noto Sans CJK SC", sans-serif; color: #222; }
.winctl { display: flex; justify-content: flex-end; gap: 19px; padding: 0 11px 4px 0; }
.menubar { height: 28px; flex: none; display: flex; align-items: center; border-bottom: 1px solid #ececec; padding-right: 6px; }
.menus { display: flex; padding-left: 10px; margin-right: auto; font-size: 13px; line-height: 25px; }
.menus a { padding: 3px 13px 0; color: #333; position: relative; height: 28px; }
.menus .on { color: #1478e8; font-weight: 700; }
.menus .on::after { content: ""; position: absolute; left: 10px; right: 10px; bottom: 0; height: 2px; background: #1478e8; }
.search { width: 319px; height: 18px; margin-top: 6px; border: 1px solid #ddd; border-radius: 2px; display: flex; align-items: center; padding: 0 4px 0 1px; color: #111; }
.marquee { flex: 1; min-width: 0; overflow: hidden; display: flex; justify-content: flex-end; white-space: nowrap; line-height: 16px; }
.marquee span { flex: none; }
.search .ic { width: 12px; height: 12px; margin-left: 4px; margin-right: 2px; }
.avatar { width: 16px; height: 17px; margin: 5px 0 0 7px; }
.avbg { fill: #92c5fb; }
.avfg { fill: #e4f2ff; }
.user { width: 42px; margin-top: 5px; }
.tools { display: flex; gap: 8px; margin-top: 5px; }
.help { width: 16px; font-size: 16px; gap: 2px; }

.ribbon { height: 100px; flex: none; display: flex; }
.group { position: relative; display: flex; flex-direction: column; padding: 3px 0 0 10px; flex: none; }
.group::after { content: ""; position: absolute; right: 0; top: 2px; height: 94px; width: 1px; background: #ddd; }
.cols { display: flex; height: 73px; align-items: flex-start; }
.cmd { height: 24px; gap: 3px; }
.big { width: 36px; height: 60px; flex-direction: column; justify-content: space-between; }
.big svg { width: 24px; height: 34px; fill: #dbe9fb; stroke: #1a73e8; stroke-width: 2; }
.cmd .tri { margin-left: 2px; }
.col { display: flex; flex-direction: column; align-items: flex-start; }
.glabel { height: 24px; line-height: 24px; display: flex; align-items: center; justify-content: center; gap: 8px; }
.g1 { width: 233px; }
.g1 .glabel { padding-right: 5px; }
.c1 { width: 99px; margin-left: 8px; }
.g2 { width: 203px; }
.g2 .glabel { padding-right: 12px; }
.c2 { width: 79px; }
.g3 { width: 276px; }
.g3 .cmd { margin-right: 10px; }
.g3 .wide { margin-right: 24px; }
.g4 { width: 237px; }
.g4 .cmd { margin-right: 12px; }
.g4 .cmd:nth-child(3) { margin-right: 18px; }
.g5 { width: 172px; }
.g5 .cmd { margin-right: 18px; }

.combos { height: 32px; flex: none; display: flex; background: #f1f1f1; border: 1px solid #d8d8d8; }
.combo { width: 100px; border-right: 1px solid #d8d8d8; display: flex; align-items: center; padding-right: 6px; }
.combo select { appearance: none; flex: 1; padding-left: 1px; height: 30px; outline: 0; }
.combo::after { content: ""; border: 3px solid transparent; border-top: 4px solid #555; border-bottom: 0; }

.work { flex: 1; min-height: 0; display: flex; background: #f7f7f7; }
.panel { background: #fff; border: 1px solid #d9d9dc; display: flex; flex-direction: column; min-height: 0; }
.phead { height: 28px; flex: none; background: #eeeff2; display: flex; align-items: center; }
.dots { width: 8px; height: 16px; margin: 0 11px 0 5px; background: radial-gradient(circle, #777 1px, transparent 1px) 0 0 / 4px 4px; }
.x { margin-left: auto; margin-right: 6px; --ink: #999; }
.navp { width: 245px; flex: none; border-bottom: 0; }
.navwrap { flex: 1; min-height: 0; display: flex; overflow: hidden; }
.nav { flex: 1; display: flex; flex-direction: column; }
.nav li { height: 28px; flex: none; }
.nav a { display: flex; align-items: center; height: 28px; padding-left: 21px; }
.nav .cat { height: 42px; background: #f5f7f9; }
.nav .cat a { height: 42px; padding-left: 11px; }
.nav .cat a > svg:first-child { width: 24px; height: 24px; margin-right: 14px; overflow: visible; }
.nav .cat .ic { width: 12px; height: 12px; margin-left: 8px; }
.nav .cat.on { background: #ebecf0; color: #3d7de8; }
.nav .cur { color: #1180f0; }
.nav .last { flex: 1; }
.nav em { margin: 0 0 14px auto; padding: 0 3px 0 8px; height: 19px; line-height: 18px; font-size: 11px; border-radius: 10px 0 0 10px; background: linear-gradient(90deg, #f5d6a5, #edc06c); color: #5a3210; }
.l { fill: #bcc6dc; }
.m { fill: #93a2c4; }
.k { fill: #526795; }
.ln { fill: none; stroke: #526795; stroke-width: 1; }
.b1 { fill: #2b80f5; }
.b2 { fill: #94c2fc; }
.b3 { fill: #55a0fb; }
.thumb { width: 4px; border-radius: 2px; background: #e8e8ea; flex: none; }
.navwrap .thumb { margin: 268px 4px 12px 4px; }

.midcol { width: 264px; flex: none; margin-left: 4px; display: flex; flex-direction: column; gap: 4px; margin-right: 3px; }
.p1 { height: 345px; flex: none; }
.p2 { flex: 1; }
.midcol .dots { margin-right: 10px; }
.tab { height: 28px; width: 68px; }
.tab.on { background: #fff; color: #1a78ea; }
.btns { display: flex; gap: 9px; padding: 7px 0 7px 10px; overflow: hidden; }
.btns button { width: 32px; height: 26px; background: #f4f4f5; border-radius: 3px; }
.split { display: flex; gap: 1px; }
.btns .split button:last-child { width: 12px; }
.find { height: 26px; margin-left: 8px; border-radius: 13px; background: #f3f3f4; padding-left: 12px; }
.find::placeholder { color: #777; opacity: 1; }
.props { border-collapse: collapse; width: 100%; table-layout: fixed; margin-top: 1px; }
.props th { height: 24px; padding: 0; font-weight: 400; background: #eee; border: 1px solid #d4d4d6; border-left: 0; }
.props th:first-child { width: 101px; }
.props th:last-child { width: 44px; }

.model { flex: 1; min-width: 0; background: #000; overflow: hidden; }
.model svg, .draw svg { display: block; width: 100%; height: 100%; }
.mtext text { fill: #fff; font-size: 17px; text-anchor: middle; }
.mtext .vt { text-anchor: start; }
.ax { font-size: 15px; text-anchor: middle; }

.disp { width: 280px; flex: none; margin-left: 4px; border-color: #c4c7cf; }
.disp .phead { padding-left: 25px; }
.dtabs { display: flex; align-items: flex-end; height: 27px; flex: none; padding-left: 3px; gap: 4px; border-bottom: 1px solid #c4c7cf; }
.dtabs button { height: 21px; width: 60px; background: #dcdcdc; border-radius: 3px 3px 0 0; color: #555; }
.dtabs .on { height: 23px; background: #fff; color: #1a78ea; border: 1px solid #c4c7cf; border-bottom: 0; }
.tbox { flex: 1; min-height: 0; margin: 2px 2px 0; border: 1px solid #d9d9dc; display: flex; overflow: hidden; }
.layers { flex: 1; border-collapse: collapse; table-layout: fixed; height: max-content; }
.layers th, .layers td { height: 21px; padding: 0; border: 1px solid #dcdcdf; border-top: 0; border-left: 0; font-weight: 400; line-height: 18px; text-align: center; white-space: nowrap; }
.layers th { height: 20px; }
.layers th:nth-child(n+2) { width: 63px; }
.layers td:first-child { text-align: left; padding-left: 41px; }
.layers .l0 td:first-child { padding-left: 21px; }
.layers .l1 td:first-child { padding-left: 31px; }
.layers input { appearance: none; display: block; width: 14px; height: 14px; margin: 0 auto; border: 1px solid #888; border-radius: 2px; background: #fff; }
.layers input:checked { border: 0; background: #2a7de1; display: grid; place-items: center; }
.layers input:checked::after { content: ""; width: 8px; height: 4px; border: solid #fff; border-width: 0 0 2px 2px; transform: rotate(-45deg); margin-bottom: 3px; }
.layers input.mix { background: #9cc8fb; box-shadow: inset 0 0 0 1px #fff, inset 0 0 0 2px #3b8df0; }
.layers input:disabled { background: #eee; border-color: #aaa; }
.tbox .thumb { height: 188px; margin: 12px 4px 0 4px; }
.pfoot { height: 39px; flex: none; display: flex; justify-content: flex-end; padding: 7px 7px 0 0; }
.pfoot button { width: 90px; height: 26px; border: 1px solid #c9cbd0; border-radius: 3px; }

.status { height: 31px; flex: none; background: #fcfcfc; display: flex; align-items: center; padding: 0 11px 0 2px; white-space: nowrap; color: #444; font-family: "Noto Sans", "Noto Sans CJK SC", sans-serif; }
.s1 { width: 90px; }
.s2 { width: 139px; }
.s3 { width: 111px; }
.s4 { width: 110px; }
.modes { display: flex; gap: 3px; }
.modes button { width: 25px; height: 25px; border: 1px solid #999; border-radius: 3px; background: #fff; }
.modes .caret { width: 36px; gap: 5px; }
.modes .on { border-color: #2f7fe6; background: #dbe8fb; }
.modes .blue { --ink: #1a73e8; }
.status .modes { margin-right: 15px; }
.status .modes button:nth-child(3) { margin: 0 3px; }
.tip { margin-left: 3px; }
.ok { width: 14px; height: 14px; margin: 0 6px 0 auto; }
.ok circle { fill: #6cc010; }
.ok path { fill: none; stroke: #fff; stroke-width: 1; }

.taskbar { height: 40px; flex: none; border-top: 1px solid #1d3c58; box-shadow: inset 0 1px 0 #8cc4e6; display: flex; align-items: center; padding-left: 8px;
  background: linear-gradient(90deg, #1b6096 0, #2a7fb8 4%, #4aa3d4 14%, #63b4de 24%, #429fd4 32%, #2d8bc6 36%, #48a0d6 43%, #2e84c4 52%, #2474b8 70%, #1f66ac 76%, #184a80 80%, #153868 100%); color: #fff; }
.orb { width: 36px; height: 36px; border-radius: 50%; background: radial-gradient(circle at 50% 85%, #5cc8f0, #1d5f8c 50%, #123a5c 75%, #7fb4d0 100%); }
.orb svg { width: 36px; height: 36px; }
.tdots { width: 9px; height: 30px; background: radial-gradient(circle, #0b2c48 1px, transparent 1px) 0 0 / 3px 4px; }
.taskbar > .tdots { margin: 0 9px 0 13px; }
.task { width: 60px; height: 38px; margin-right: 2px; border: 1px solid #16476a; border-radius: 3px; background: linear-gradient(#7dbce0, #3f93c6 50%, #4fa6d6); box-shadow: inset 0 0 0 1px #a8d4ea; }
.task.on { background: linear-gradient(135deg, #e6f3fa, #a7d3ea 60%, #8cc4e4); }
.task svg { width: 32px; height: 32px; }
.spiral { fill: none; stroke: #14a4f4; stroke-width: 6; }
.ebg { fill: #6cbf2c; stroke: #fff; stroke-width: 2; }
.eline { fill: none; stroke: #fff; stroke-width: 4; }
.ering { fill: none; stroke: #4d9a1c; stroke-width: 2; }
.qo { fill: none; stroke: #222; stroke-width: 6; }
.qi { fill: none; stroke: #ff0; stroke-width: 4; }
.tray { margin-left: auto; height: 100%; display: flex; align-items: center; gap: 8px; }
.tray .tdots { margin-right: 3px; }
.tray svg { width: 16px; height: 16px; }
.tray svg:nth-of-type(-n+3) { margin: 0 -2px 6px 0; }
.q { font: bold 13px "Liberation Sans", sans-serif; fill: #fff; text-anchor: middle; }
.tray time { display: flex; flex-direction: column; align-items: center; width: 74px; }
.tray .flag { margin: 0 4px; }
.desk { width: 14px; height: 38px; border: 1px solid #7f9ab8; background: linear-gradient(135deg, #5b7da4, #1c3f6c); }

.dialog { position: absolute; left: 404px; top: 73px; right: 240px; bottom: 164px; display: flex; flex-direction: column; background: #fff; border: 1px solid #b9bbc0; border-right-width: 0; box-shadow: 0 3px 9px rgba(0, 0, 0, .55); }
.dtitle { height: 29px; flex: none; display: flex; align-items: center; gap: 12px; padding: 0 10px; border-bottom: 1px solid #c2c5ca; }
h2 { font-size: 14px; line-height: 20px; margin-right: auto; }
.dtitle .ic { --ink: #777; }
.bar { height: 29px; flex: none; display: flex; align-items: center; border-bottom: 2px solid #c2c5ca; }
.bar + .bar { height: 26px; border-bottom-width: 1px; }
.bar .cmd { gap: 4px; padding: 0 6px 0 5px; }
.bar .cmd:has(.tri) { padding-right: 0; }
.bar .tri { margin: 0 1px 0 2px; border-top-color: #999; }
.grip { width: 2px; height: 14px; margin: 0 3px 0 4px; background: repeating-linear-gradient(#222 0 2px, transparent 2px 4px); }
.sep { width: 1px; height: 20px; margin: 0 3px 0 2px; background: #d4d6da; }
.sep.thick { width: 2px; height: 25px; margin: 0; background: #c2c5ca; }
.dbody { flex: 1; min-height: 0; display: flex; }
.side { width: 43px; flex: none; padding: 6px 0 0 4px; border-right: 1px solid #c2c5ca; display: flex; flex-direction: column; gap: 5px; }
.hgrip { width: 26px; height: 2px; margin: 1px 0 1px 4px; background: repeating-linear-gradient(90deg, #222 0 2px, transparent 2px 4px); }
.side button { width: 27px; height: 22px; border-radius: 3px; padding-right: 2px; }
.side .on { background: #c2d9f3; padding: 0; }
.side .caret { width: 34px; gap: 5px; margin-left: 1px; }
.draw { flex: 1; min-width: 0; background: #000; position: relative; overflow: hidden; }
.dims text { fill: #eee; font-size: 15px; text-anchor: middle; }
.coords { position: absolute; left: 772px; top: 324px; display: flex; gap: 9px; color: #222; font-family: "Noto Sans", sans-serif; }
.cx { width: 63px; height: 19px; padding: 0 2px; color: #fff; background: linear-gradient(#0a74d8, #0a74d8) 2px 1px / 21px 17px no-repeat #fff; }
.cy { width: 64px; height: 19px; background: #979797; padding-left: 2px; }
.dfoot { height: 43px; flex: none; background: #dedee0; display: flex; align-items: center; padding: 0 1px; }
.xy { width: 156px; font: 13px/18px "Noto Sans", sans-serif; }
.zero { width: 66px; }
.dfoot .modes { gap: 6px; }
.hint { margin: 0 auto 0 6px; }
.act { width: 80px; height: 26px; margin: 0 6px 4px 0; border: 1px solid #cfd0d4; border-radius: 3px; background: #fff; }
.pri { background: #2b80e2; border-color: #2b80e2; color: #fff; }
.rs { width: 9px; height: 9px; margin: 22px 3px 0 1px; background: radial-gradient(circle, #777 1px, transparent 1px) 0 0 / 3px 3px; clip-path: polygon(100% 0, 100% 100%, 0 100%); }
```
